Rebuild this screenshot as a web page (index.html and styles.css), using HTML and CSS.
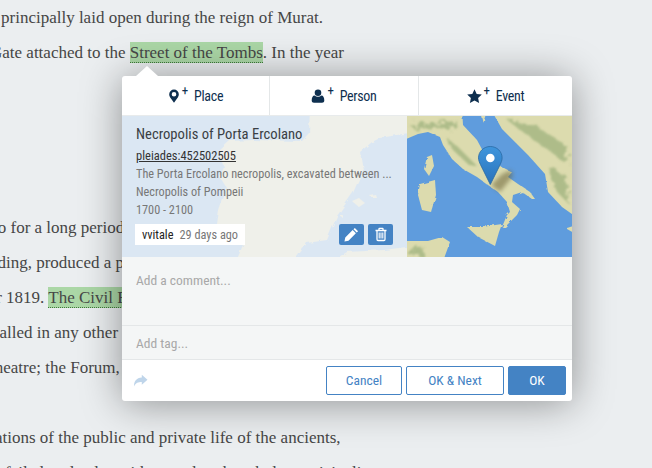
FILE: index.html
```html
<!DOCTYPE html>
<html lang="en">
<head>
	<meta charset="UTF-8">
	<title>Annotation</title>
	<link rel="stylesheet" href="styles.css">
</head>
<body>
	<div class="text">
		<div class="line l1">principally laid open during the reign of Murat.</div>
		<div class="line l2">Gate attached to the <span class="entity">Street of the Tombs</span>. In the year</div>
		<div class="line"></div>
		<div class="line"></div>
		<div class="line"></div>
		<div class="line"></div>
		<div class="line l7">to for a long period</div>
		<div class="line l8">building, produced a p</div>
		<div class="line l9">for 1819. <span class="entity">The Civil F</span></div>
		<div class="line l10">installed in any other</div>
		<div class="line l11">theatre; the Forum,</div>
		<div class="line"></div>
		<div class="line l13">habitations of the public and private life of the ancients,</div>
		<div class="line l14">failed to do also with regard to the whole municipality</div>
	</div>

	<div class="popup">
		<div class="arrow"></div>
		<div class="tabs">
			<div class="tab">
				<svg class="icon" width="12" height="14" viewBox="0 0 12 14"><path fill-rule="evenodd" d="M6 0.5a4.8 4.8 0 0 0-4.8 4.8c0 1.3 0.5 2.2 1 3.1L6 13.8l3.8-5.400c0.500-0.900 1-1.800 1-3.100A4.800 4.800 0 0 0 6 0.500zM6 7.600a2.300 2.300 0 1 1 0-4.600 2.300 2.300 0 0 1 0 4.600z"/></svg>
				<span class="plus">+</span>
				<span class="label">Place</span>
			</div>
			<div class="tab">
				<svg class="icon" width="14" height="14" viewBox="0 0 14 14"><circle cx="7" cy="3.800" r="3.300"/><path d="M0.700 11.500c0-3 1-5 2.900-5 1 0.800 2.100 1.200 3.400 1.200s2.400-0.400 3.400-1.200c1.900 0 2.900 2 2.900 5 0 1.500-1 2.200-2.200 2.200H2.900c-1.200 0-2.200-0.700-2.200-2.200z"/></svg>
				<span class="plus">+</span>
				<span class="label">Person</span>
			</div>
			<div class="tab">
				<svg class="icon" width="15" height="14" viewBox="0 0 15 14"><polygon points="7.500,0.300 9.700,4.900 14.800,5.500 11.100,9 12.100,14 7.500,11.500 2.900,14 3.900,9 0.200,5.500 5.300,4.900"/></svg>
				<span class="plus">+</span>
				<span class="label">Event</span>
			</div>
		</div>

		<div class="place">
			<div class="card">
				<svg class="card-map" width="285" height="141" viewBox="0 0 285 141">
					<defs>
						<filter id="rough" x="-5%" y="-5%" width="110%" height="110%">
							<feTurbulence type="fractalNoise" baseFrequency="0.090" numOctaves="3" seed="4"/>
							<feDisplacementMap in="SourceGraphic" scale="5"/>
						</filter>
					</defs>
					<rect width="285" height="141" fill="#dbe7f3"/>
					<g fill="#eff0ea" filter="url(#rough)">
						<polygon points="188,-8 187,17 180,25 131,24 108,25 96,36 102,51 98,61 104,71 96,94 94,107 100,119 121,129 113,148 170,148 185,127 205,124 215,100 231,77 241,54 238,36 250,26 258,22 292,16 292,-8"/>
						<polygon points="205,148 225,136 262,134 292,130 292,148"/>
						<polygon points="231,86 238,83 243,87 237,91"/>
						<polygon points="248,80 254,79 255,82 250,82"/>
						<polygon points="218,100 221,99 221,102"/>
					</g>
				</svg>
				<div class="title">Necropolis of Porta Ercolano</div>
				<a class="uri">pleiades:452502505</a>
				<div class="info">The Porta Ercolano necropolis, excavated between ...</div>
				<div class="info">Necropolis of Pompeii</div>
				<div class="info">1700 - 2100</div>
				<div class="card-foot">
					<div class="last-mod"><span class="by">vvitale</span><span class="ago">29 days ago</span></div>
					<div class="card-btns">
						<div class="tiny-btn">
							<svg width="15" height="15" viewBox="0 0 13 13"><path fill="#fff" d="M9.400 0.800l2.800 2.800-1.200 1.200-2.800-2.800zM7.500 2.700l2.800 2.800-6.400 6.400-3.500 0.700 0.700-3.500z"/></svg>
						</div>
						<div class="tiny-btn">
							<svg width="12" height="15" viewBox="0 0 12 14"><path fill="none" stroke="#fff" stroke-width="1.300" d="M0.500 3h11M2 3v8.800c0 0.700 0.400 1.200 1 1.200h6c0.600 0 1-0.500 1-1.200V3M4 3V1.300c0-0.300 0.200-0.500 0.500-0.500h3c0.300 0 0.500 0.200 0.500 0.500V3"/><path stroke="#fff" stroke-width="1.100" d="M4.200 5v6M6 5v6M7.800 5v6"/></svg>
						</div>
					</div>
				</div>
			</div>
			<svg class="mini-map" width="165" height="141" viewBox="0 0 165 141">
				<defs>
					<linearGradient id="pin" x1="0" y1="0" x2="0" y2="1"><stop offset="0" stop-color="#3f95dc"/><stop offset="1" stop-color="#2a73bb"/></linearGradient>
					<filter id="blur1" x="-30%" y="-30%" width="160%" height="160%"><feGaussianBlur stdDeviation="2"/></filter>
					<filter id="coast" x="-5%" y="-5%" width="110%" height="110%">
						<feTurbulence type="fractalNoise" baseFrequency="0.120" numOctaves="3" seed="7"/>
						<feDisplacementMap in="SourceGraphic" scale="3"/>
					</filter>
					<filter id="hills" x="-20%" y="-20%" width="140%" height="140%">
						<feTurbulence type="fractalNoise" baseFrequency="0.160" numOctaves="3" seed="2"/>
						<feDisplacementMap in="SourceGraphic" scale="14"/>
						<feGaussianBlur stdDeviation="0.900"/>
					</filter>
				</defs>
				<rect width="165" height="141" fill="#5f9cdd"/>
				<g fill="#dcdbae" filter="url(#coast)">
					<polygon points="-8,26 11,18 21,16 33,21 36,29 45,43 56,53 70,61 81,69 91,76 100,86 103,96 100,99 95,111 98,111 110,99 113,93 105,86 106,79 115,76 125,83 128,83 123,76 111,68 101,61 105,56 95,51 78,39 70,24 56,9 55,-8 -8,-8"/>
					<polygon points="83,-8 95,13 108,26 121,39 138,58 141,76 155,91 172,103 172,-8"/>
					<polygon points="72,-8 76,7 81,-8"/>
					<polygon points="160,112 172,108 172,120 160,113"/>
					<polygon points="20,41 25,39 27,50 22,60 17,53"/>
					<polygon points="13,68 28,64 29,79 24,96 15,94 11,79"/>
					<polygon points="60,111 75,111 95,108 92,116 88,130 71,121"/>
					<polygon points="-8,125 21,125 35,121 43,126 35,148 -8,148"/>
				</g>
				<g fill="#a3b581" opacity="0.800" filter="url(#hills)">
					<polygon points="2,10 22,7 50,5 52,12 34,12 12,14"/>
					<polygon points="42,24 50,30 70,50 62,49 46,34"/>
					<polygon points="100,4 130,10 160,30 160,48 135,30"/>
					<polygon points="140,50 160,60 162,88 150,76"/>
					<polygon points="2,133 18,131 14,139 2,139"/>
				</g>
				<polygon points="84,69 95,58 104,54 106,60 93,76" fill="#6c6338" opacity="0.550" filter="url(#blur1)"/>
				<path fill="url(#pin)" stroke="#2a69a3" stroke-width="0.800" d="M83.300 30.500c-6.600 0-11.800 5-11.800 11.300 0 2.500 1 4.700 2 6.900L83.300 68.500l9.800-19.800c1-2.200 2-4.400 2-6.900 0-6.300-5.200-11.300-11.800-11.300z"/>
				<circle cx="83.300" cy="42" r="4.300" fill="#fff"/>
			</svg>
		</div>

		<div class="field comment">Add a comment...</div>
		<div class="field tag">Add tag...</div>

		<div class="footer">
			<svg class="reply" width="15" height="14" viewBox="0 0 15 14"><path d="M8.800 0.800L14.500 5.800l-5.700 5V7.900c-3.600 0-6.200 0.600-7.700 4.700C0.700 7.500 3.400 3.900 8.800 3.600z"/></svg>
			<div class="btn">Cancel</div>
			<div class="btn">OK &amp; Next</div>
			<div class="btn primary">OK</div>
		</div>
	</div>
</body>
</html>
```

FILE: styles.css
```css
html, body {
	width: 100%;
	height: 100%;
	margin: 0;
	padding: 0;
	overflow: hidden;
}
body {
	background: #ebeef0;
	color: #464646;
}
.text {
	font-family: "Liberation Serif", serif;
	font-size: 17px;
	line-height: 35px;
}
.line {
	height: 35px;
	white-space: nowrap;
}
.l1 { margin-left: 1px; }
.l2 { margin-left: -10px; }
.l7 { margin-left: -7px; }
.l8 { margin-left: -29px; }
.l9 { margin-left: -18px; }
.l10 { margin-left: -25px; }
.l11 { margin-left: -10px; }
.l13 { margin-left: -39px; }
.l14 { margin-left: 5px; }
.entity {
	background: #abd7a6;
	border-bottom: 1px dotted #3e7a3a;
	padding: 1px 0 0;
}
.popup {
	position: absolute;
	top: 76px;
	left: 122px;
	width: 450px;
	height: 325px;
	display: flex;
	flex-direction: column;
	background: #fff;
	border-radius: 3px;
	box-shadow: 0 2px 40px rgba(0, 0, 0, 0.4);
	font-family: "Roboto Condensed", Roboto, sans-serif;
}
.arrow {
	position: absolute;
	top: -10px;
	left: 14px;
	width: 0;
	height: 0;
	border-left: 11px solid transparent;
	border-right: 11px solid transparent;
	border-bottom: 10px solid #fff;
}
.tabs {
	display: grid;
	grid-template-columns: 148px 149px 1fr;
	height: 39px;
	border-bottom: 1px solid #e8ebec;
	flex-shrink: 0;
}
.tab {
	display: flex;
	align-items: center;
	justify-content: center;
	color: #0e2f4f;
	font-size: 14px;
	letter-spacing: -0.3px;
	border-right: 1px solid #e4e7e8;
}
.tab:last-child {
	border-right: 0;
}
.icon {
	fill: #0e2f4f;
}
.plus {
	font-size: 13px;
	margin: -11px 6px 0 2px;
}
.place {
	display: flex;
	height: 141px;
	flex-shrink: 0;
}
.card {
	position: relative;
	width: 285px;
	box-sizing: border-box;
	padding: 8px 14px 0;
	display: flex;
	flex-direction: column;
	overflow: hidden;
}
.card > * {
	position: relative;
}
.card .card-map {
	position: absolute;
	top: 0;
	left: 0;
}
.title {
	font-size: 14.650px;
	line-height: 20px;
	color: #3a3f44;
	margin-bottom: 3px;
}
.uri {
	font-size: 12.500px;
	line-height: 18px;
	color: #333;
	text-decoration: underline;
}
.info {
	font-size: 12.250px;
	line-height: 18px;
	color: #777;
}
.card-foot {
	display: flex;
	justify-content: space-between;
	align-items: center;
	margin: 5px 0 0 -1px;
}
.last-mod {
	display: flex;
	gap: 6px;
	align-items: center;
	height: 21px;
	padding: 0 7px;
	background: #fff;
	font-size: 12.300px;
}
.by {
	color: #222;
}
.ago {
	color: #777;
}
.card-btns {
	display: flex;
	gap: 4px;
}
.tiny-btn {
	width: 25px;
	height: 21px;
	display: flex;
	align-items: center;
	justify-content: center;
	background: #4483c4;
	border-radius: 2px;
}
.field {
	background: #f4f6f6;
	color: #a8a8a8;
	font-size: 13.500px;
	padding-left: 14px;
	border-bottom: 1px solid #e4e7e8;
	flex-shrink: 0;
	box-sizing: border-box;
}
.comment {
	height: 69px;
	padding-top: 14px;
	line-height: 18px;
}
.tag {
	height: 34px;
	padding-top: 8px;
	line-height: 18px;
}
.footer {
	flex: 1;
	display: flex;
	align-items: center;
	gap: 4px;
	padding: 0 6px 0 11px;
}
.reply {
	fill: #bfd5ea;
	margin-right: auto;
}
.btn {
	box-sizing: border-box;
	height: 29px;
	line-height: 27px;
	text-align: center;
	border: 1px solid #4483c4;
	border-radius: 2px;
	color: #4483c4;
	font-size: 13.500px;
	width: 76px;
}
.btn:nth-of-type(2) {
	width: 98px;
}
.primary {
	background: #4483c4;
	color: #fff;
	width: 58px;
}
```
